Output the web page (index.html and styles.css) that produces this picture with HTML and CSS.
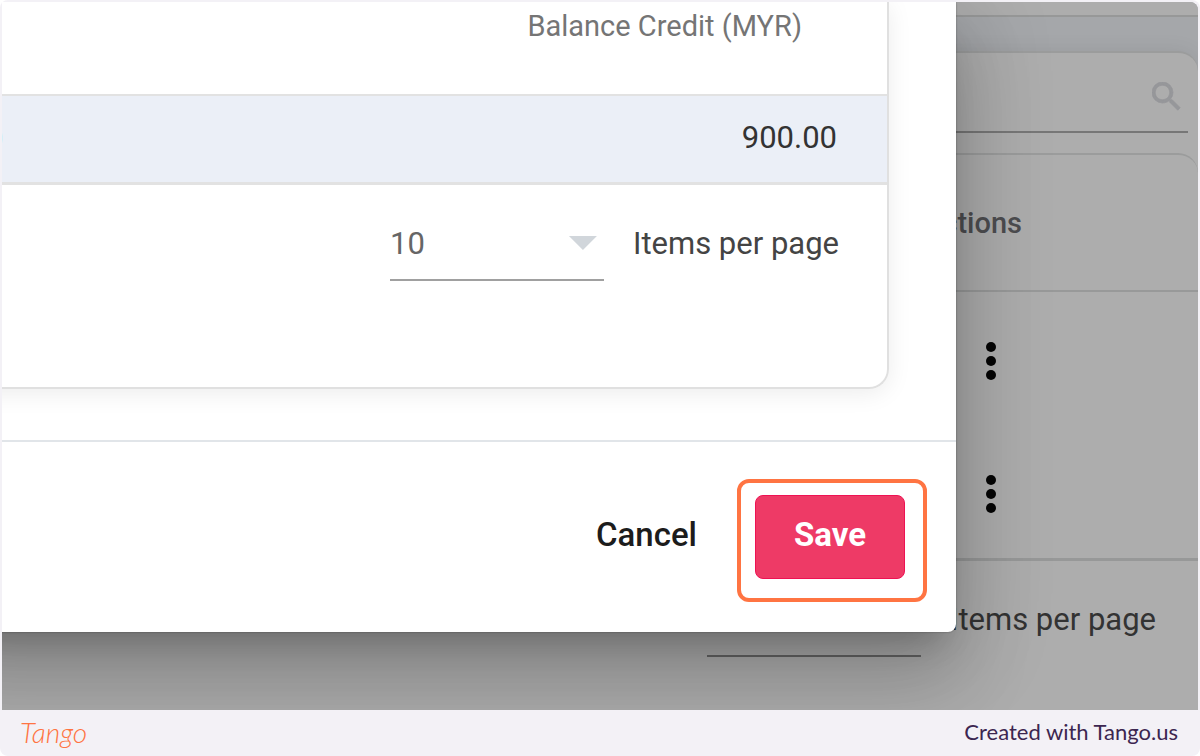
FILE: index.html
```
<!DOCTYPE html>
<html lang="en">
<head>
<meta charset="utf-8">
<meta name="viewport" content="width=device-width, initial-scale=1">
<title>Save balance credit</title>
<link rel="stylesheet" href="styles.css">
</head>
<body>
<div class="frame">
  <main class="stage">
    <div class="page">
      <div class="topbar"></div>
      <section class="panel">
        <div class="search">
          <input class="search-input" type="search" aria-label="Search">
          <svg class="search-icon" viewBox="3 3 18 18" aria-hidden="true"><path d="M15.5 14h-.79l-.28-.27A6.47 6.47 0 0 0 16 9.5 6.5 6.5 0 1 0 9.5 16c1.61 0 3.09-.59 4.23-1.57l.27.28v.79l5 4.99L20.49 19l-4.99-5zm-6 0C7.01 14 5 11.99 5 9.5S7.01 5 9.5 5 14 7.01 14 9.5 11.99 14 9.5 14z"/></svg>
        </div>
        <div class="list">
          <div class="list-head">Actions</div>
          <div class="list-row"><button class="more" aria-label="More actions"><svg viewBox="0 0 10 38"><circle cx="5" cy="5" r="5"/><circle cx="5" cy="19" r="5"/><circle cx="5" cy="33" r="5"/></svg></button></div>
          <div class="list-row"><button class="more" aria-label="More actions"><svg viewBox="0 0 10 38"><circle cx="5" cy="5" r="5"/><circle cx="5" cy="19" r="5"/><circle cx="5" cy="33" r="5"/></svg></button></div>
          <div class="pager pager-back">
            <span class="select"><select id="page-size-back" class="select-box"><option></option></select></span>
            <label for="page-size-back">Items per page</label>
          </div>
        </div>
      </section>
    </div>

    <div class="dialog" role="dialog" aria-label="Balance credit">
      <div class="card">
        <table class="table">
          <thead><tr><th class="edge"></th><th>Balance Credit (MYR)</th></tr></thead>
          <tbody><tr><td class="edge">0</td><td>900.00</td></tr></tbody>
        </table>
        <div class="pager">
          <span class="select select-arrow"><select id="page-size" class="select-box"><option>10</option></select></span>
          <label for="page-size">Items per page</label>
        </div>
      </div>
      <div class="actions">
        <button class="button">Cancel</button>
        <span class="highlight"><button class="button button-save">Save</button></span>
      </div>
    </div>
  </main>
  <footer class="footer">
    <span class="brand">Tango</span>
    <span class="credit">Created with Tango.us</span>
  </footer>
</div>
</body>
</html>
```
FILE: styles.css
```
* { box-sizing: border-box; }

body {
  margin: 0;
  background: #fff;
  color: #444;
  font: 31px/40px Roboto, sans-serif;
}

button, input, select {
  margin: 0;
  padding: 0;
  border: 0;
  background: none;
  color: inherit;
  font: inherit;
}

.frame {
  display: flex;
  flex-direction: column;
  min-height: 100vh;
  padding: 2px 2px 0;
  border-radius: 8px;
  background: #f3f1f6;
}

.stage {
  position: relative;
  display: flex;
  flex: 1;
  overflow: hidden;
  border-radius: 0 8px 0 0;
  background: #a5a7aa;
}

/* Dimmed page behind the dialog */
.page {
  display: flex;
  flex: 1;
  flex-direction: column;
  gap: 34px;
  color: #333;
}

.topbar {
  height: 15px;
  border-bottom: 2px solid #979898;
  background: #adadad;
}

.panel {
  flex: 1;
  padding-top: 16px;
  border-top: 2px solid #9b9c9c;
  border-radius: 0 20px 0 0;
  background: #adadad;
  box-shadow: 0 0 20px rgba(0, 0, 0, .08);
}

.search {
  display: flex;
  align-items: center;
  height: 64px;
  margin: 0 10px 20px;
  padding: 0 7px 8px 0;
  border-bottom: 2px solid #777;
}

.search-input { flex: 1; min-width: 0; outline: 0; }

.search-icon {
  width: 29px;
  height: 29px;
  fill: #96979a;
  stroke: #96979a;
  stroke-width: .5;
}

.list {
  border-top: 2px solid #9b9c9c;
  border-radius: 0 20px 0 0;
}

.list-head {
  height: 137px;
  padding: 48px 176px 0 0;
  border-bottom: 2px solid #989999;
  font-size: 29px;
  font-weight: 500;
  color: #4d4d50;
  text-align: right;
}

.list-row {
  display: flex;
  align-items: flex-start;
  justify-content: flex-end;
  height: 133px;
  padding: 50px 202px 0 0;
}

.list-row + .list-row {
  height: 136px;
  border-bottom: 3px solid #979898;
}

.more { display: flex; }

.more svg { width: 10px; height: 38px; fill: #050505; }

.pager {
  display: flex;
  align-items: flex-start;
  justify-content: flex-end;
  gap: 29px;
  padding: 34px 48px 0 0;
  line-height: 50px;
}

.pager-back { padding-right: 42px; }

.select {
  position: relative;
  width: 214px;
  height: 62px;
  border-bottom: 2px solid #a0a0a0;
}

.pager-back .select { border-color: #666; }

.select-arrow::after {
  content: "";
  position: absolute;
  top: 17px;
  right: 7px;
  width: 28px;
  height: 14px;
  background: #d1d6db;
  clip-path: polygon(0 0, 100% 0, 50% 100%);
  pointer-events: none;
}

.select-box {
  display: block;
  width: 100%;
  height: 46px;
  appearance: none;
  color: #666;
}

/* Dialog: runs on past the left edge of the stage */
.dialog {
  position: absolute;
  top: 0;
  left: -60px;
  right: 242px;
  border-radius: 0 0 8px 0;
  background: #fff;
  box-shadow: 0 22px 30px -14px rgba(0, 0, 0, .2), 0 48px 76px 6px rgba(0, 0, 0, .14), 0 18px 92px 16px rgba(0, 0, 0, .12), 0 0 2px rgba(0, 0, 0, .4);
}

.card {
  margin-right: 67px;
  padding-bottom: 106px;
  border: solid #e0e0e0;
  border-width: 0 2px 2px 0;
  border-radius: 0 0 20px 0;
  box-shadow: 0 4px 24px rgba(0, 0, 0, .08);
}

.table {
  width: 100%;
  border-collapse: separate;
  border-spacing: 0;
  text-align: right;
}

.table th {
  height: 94px;
  padding: 4px 85px 48px 0;
  border-bottom: 2px solid #e2e2e2;
  font-size: 29px;
  font-weight: 400;
  line-height: 40px;
  color: #757575;
}

.table td {
  height: 89px;
  padding: 0 50px 2px 0;
  border-bottom: 3px solid #e2e2e2;
  background: #ebeff7;
  color: #333;
}

.table .edge {
  width: 80px;
  padding: 0;
  text-align: left;
  text-indent: 44px;
}

.actions {
  display: flex;
  align-items: center;
  justify-content: flex-end;
  gap: 58px;
  height: 192px;
  margin-top: 51px;
  padding-right: 51px;
  border-top: 2px solid #e1e5e9;
}

.button {
  padding-bottom: 4px;
  font-size: 33px;
  font-weight: 500;
  color: #1c1c1c;
  cursor: pointer;
}

.button-save {
  width: 150px;
  height: 84px;
  border: 1px solid #ee1253;
  border-radius: 8px;
  background: #ee3a66;
  font-weight: 700;
  color: #fff;
}

.highlight { position: relative; display: flex; }

.highlight::after {
  content: "";
  position: absolute;
  inset: -16px -22px -23px -18px;
  border: 4px solid #ff7442;
  border-radius: 12px;
  pointer-events: none;
}

.footer {
  display: flex;
  align-items: center;
  justify-content: space-between;
  height: 46px;
  padding: 0 20px 2px 18px;
  font: 22px/28px Lato, sans-serif;
  color: #3c2650;
}

.brand {
  font-size: 28px;
  font-style: italic;
  font-weight: 300;
  color: #ff7442;
}
```
